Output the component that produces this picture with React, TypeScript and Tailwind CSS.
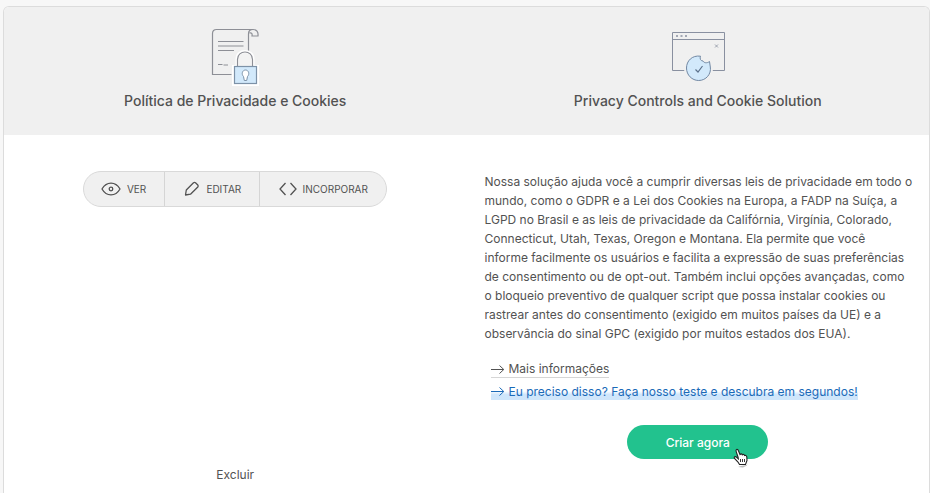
import type { ReactNode } from "react";

function PolicyIcon() {
  return (
    <svg width="48" height="58" viewBox="0 0 48 58" fill="none" stroke="#8d8f96" strokeWidth="1.2" aria-hidden="true">
      <path d="M20.500 46.500H1.500V5.500C1.500 2.700 3 1.500 5.500 1.500H42" />
      <path d="M37.500 24V6C37.500 3 38.500 1.500 42 1.500C45.500 1.500 47.500 3.500 47 8H41C41.500 5.500 40.500 4.500 38.500 5" />
      <path d="M7 13.500H32.500M7 18H32.500M7 22.500H23M7 36.500H11.500M12.500 37H17" />
      <path d="M22.500 56.500V38.500H26V31C26 21 42 21 42 31V38.500H46.500V56.500Z" stroke="#fff" strokeWidth="3" fill="#f3f3f3" />
      <path d="M26.500 38.500V31.500C26.500 21.500 41.500 21.500 41.500 31.500V38.500" />
      <rect x="23.500" y="38.500" width="22" height="17" fill="#d2e9fb" stroke="#7d92a8" />
      <path d="M33.300 52.500L32.500 48.500C30 46 31.500 42 34.500 42C37.500 42 39 46 36.500 48.500L35.700 52.500Z" fill="#fff" stroke="#7d92a8" strokeWidth="1" />
    </svg>
  );
}

function CookieIcon() {
  return (
    <svg width="54" height="58" viewBox="0 0 54 58" fill="none" stroke="#8990a0" aria-hidden="true">
      <path d="M1.500 4.500H53.500V42.500H1.500ZM1.500 11.500H53.500" />
      <path d="M5 8H7M9.500 8H11.500M14 8H16" strokeWidth="1.500" />
      <path d="M44 16.500L47 19.500M47 16.500L44 19.500" strokeWidth=".8" />
      <circle cx="27.500" cy="40" r="14.500" fill="#f0f0f0" stroke="none" />
      <path d="M29.500 28.200C21 27 15.500 33 15.500 40C15.500 47 21 52.500 27.700 52.500C35 52.500 40.500 46 39.300 39L38.500 33.500C36 35.500 33 35 32 33C29.500 33 28.500 30.500 29.500 28.200Z" fill="#d2e9fb" stroke="#7288a3" />
      <path d="M24.500 41.500L27 44L31.500 38" stroke="#5d728c" strokeWidth="1.200" />
    </svg>
  );
}

function Arrow() {
  return (
    <svg className="mr-1 shrink-0" width="14" height="10" viewBox="0 0 14 10" fill="none" stroke="currentColor" aria-hidden="true">
      <path d="M0 5.500H12.500M8.500 1.500L12.800 5.500L8.500 9.500" />
    </svg>
  );
}

function Product({ icon, title }: { icon: ReactNode; title: string }) {
  return (
    <div className="flex flex-col items-center pt-[21px]">
      {icon}
      <h2 className="mt-[5px] text-[14px] leading-5 font-medium">{title}</h2>
    </div>
  );
}

function ToolButton({ icon, label, className }: { icon: ReactNode; label: string; className: string }) {
  return (
    <button type="button" className={`flex items-center gap-1.5 border-[#d5d5d5] text-[10px] leading-4 uppercase ${className}`}>
      {icon}
      <span>{label}</span>
    </button>
  );
}

export default function App() {
  return (
    <div className="flex min-h-screen flex-col bg-[#f7f7f7] pt-1.5 pl-[3px] font-['Inter','Liberation_Sans',sans-serif] text-[12px] leading-[19px] text-[#525252]">
      <main className="flex flex-1 flex-col overflow-hidden rounded-t-md border-x border-t border-[#dcdcdc] bg-white">
        <header className="grid h-32 grid-cols-2 bg-[#f0f0f0]">
          <Product icon={<PolicyIcon />} title="Política de Privacidade e Cookies" />
          <Product icon={<CookieIcon />} title="Privacy Controls and Cookie Solution" />
        </header>
        <div className="grid flex-1 grid-cols-2">
          <section className="flex flex-col items-center pt-9 pb-[9px]">
            <div className="flex h-9 w-[304px] overflow-hidden rounded-full border border-[#d9d9d9] bg-[#f0f0f0]">
              <ToolButton
                className="w-20 justify-end pr-[18px]"
                label="Ver"
                icon={
                  <svg width="20" height="14" viewBox="0 0 20 14" fill="none" stroke="currentColor" strokeWidth="1.300" aria-hidden="true">
                    <path d="M1 7C5.500-.8 14.500-.8 19 7C14.500 14.800 5.500 14.800 1 7Z" />
                    <circle cx="10" cy="7" r="1.800" />
                  </svg>
                }
              />
              <ToolButton
                className="w-[95px] justify-end border-l pr-[18px]"
                label="Editar"
                icon={
                  <svg width="16" height="16" viewBox="0 0 16 16" fill="none" stroke="currentColor" strokeWidth="1.300" aria-hidden="true">
                    <path d="M1.500 14L2.300 9L9.500 1.800Q10.500 1 11.500 1.800L13.800 4Q14.600 5 13.800 6L6.500 13.200Z" strokeLinejoin="round" />
                  </svg>
                }
              />
              <ToolButton
                className="flex-1 justify-center border-l"
                label="Incorporar"
                icon={
                  <svg width="18" height="14" viewBox="0 0 18 14" fill="none" stroke="currentColor" strokeWidth="1.300" aria-hidden="true">
                    <path d="M6.500 1L1 7L6.500 13M11.500 1L17 7L11.500 13" />
                  </svg>
                }
              />
            </div>
            <button type="button" className="mt-auto">Excluir</button>
          </section>
          <section className="flex flex-col px-[18px] pt-[37px] pb-6">
            <p className="whitespace-nowrap">
              Nossa solução ajuda você a cumprir diversas leis de privacidade em todo o<br />
              mundo, como o GDPR e a Lei dos Cookies na Europa, a FADP na Suíça, a<br />
              LGPD no Brasil e as leis de privacidade da Califórnia, Virgínia, Colorado,<br />
              Connecticut, Utah, Texas, Oregon e Montana. Ela permite que você<br />
              informe facilmente os usuários e facilita a expressão de suas preferências<br />
              de consentimento ou de opt-out. Também inclui opções avançadas, como<br />
              o bloqueio preventivo de qualquer script que possa instalar cookies ou<br />
              rastrear antes do consentimento (exigido em muitos países da UE) e a<br />
              observância do sinal GPC (exigido por muitos estados dos EUA).
            </p>
            <div className="mt-[17px] flex flex-col items-start gap-1 pl-1.5 whitespace-nowrap">
              <a href="#info" className="flex h-[18px] items-center border-b border-[#d6d6d6]"><Arrow />Mais informações</a>
              <a href="#quiz" className="flex h-[18px] items-center bg-linear-to-b from-transparent from-50% to-[#cfe6fb] to-70% text-[#1b6ab8]"><Arrow />Eu preciso disso? Faça nosso teste e descubra em segundos!</a>
            </div>
            <div className="relative mt-[25px] self-center">
              <button type="button" className="h-[34px] w-[141px] rounded-full bg-[#22c28e] font-medium text-white">Criar agora</button>
              <svg className="absolute top-[23px] left-[106px]" width="17" height="20" viewBox="0 0 17 20" aria-hidden="true">
                <path d="M5 19L10 19.500L14 17.500L15.500 12L14 17L8 18Z" fill="#777" opacity=".5" />
                <path d="M5 9L3.200 3.600C2.400 1.200 4.500.5 5.300 2.500L7 6.500C8 5.500 9 5.800 9.300 6.800C10.200 6 11.300 6.500 11.600 7.500C12.800 7 13.700 7.800 13.800 9L14 12.500L12.500 16.500H6.500L5 14L1.500 10.500C.5 8.800 2.500 8 3.700 9.300L5.300 10.800Z" fill="#fff" stroke="#222" strokeWidth="1.100" />
                <path d="M7.500 11V14M9.500 11V14M11.500 11V14" stroke="#222" strokeWidth=".9" />
              </svg>
            </div>
          </section>
        </div>
      </main>
    </div>
  );
}
